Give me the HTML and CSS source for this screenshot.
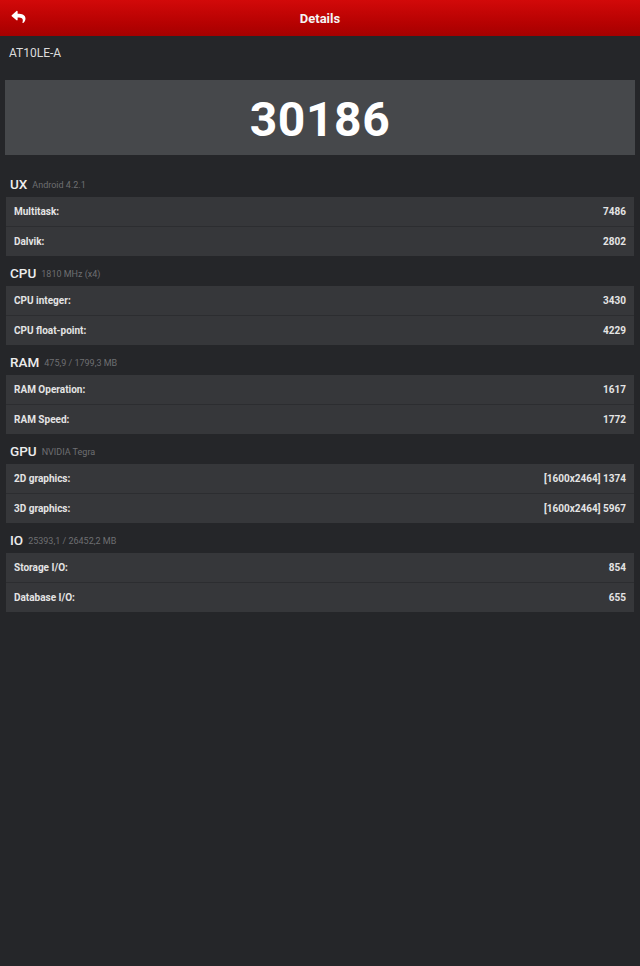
FILE: index.html
```html
<!DOCTYPE html>
<html>
<head>
<meta charset="utf-8">
<link rel="stylesheet" href="styles.css">
</head>
<body>
<header class="topbar">
  <svg class="back" viewBox="0 0 512 512" aria-hidden="true"><path fill="#fff" d="M8.3 189.8L184.3 37.9C199.7 24.5 224 35.3 224 56v80.1c160.6 1.8 288 34 288 186.2 0 61.4-39.6 122.3-83.3 154.1-13.7 9.9-33.1-2.5-28.1-18.6 45.3-145-21.5-183.5-176.6-185.7V360c0 20.7-24.3 31.5-39.7 18.2l-176-152c-11.1-9.6-11.1-26.8 0-36.4z"/></svg>
  <div class="title">Details</div>
</header>
<div class="model">AT10LE-A</div>
<div class="score">30186</div>

<section class="group">
  <div class="ghead"><span class="gname">UX</span><span class="gsub">Android 4.2.1</span></div>
  <div class="row"><span>Multitask:</span><span>7486</span></div>
  <div class="row"><span>Dalvik:</span><span>2802</span></div>
</section>
<section class="group">
  <div class="ghead"><span class="gname">CPU</span><span class="gsub">1810 MHz (x4)</span></div>
  <div class="row"><span>CPU integer:</span><span>3430</span></div>
  <div class="row"><span>CPU float-point:</span><span>4229</span></div>
</section>
<section class="group">
  <div class="ghead"><span class="gname">RAM</span><span class="gsub">475,9 / 1799,3 MB</span></div>
  <div class="row"><span>RAM Operation:</span><span>1617</span></div>
  <div class="row"><span>RAM Speed:</span><span>1772</span></div>
</section>
<section class="group">
  <div class="ghead"><span class="gname">GPU</span><span class="gsub">NVIDIA Tegra</span></div>
  <div class="row"><span>2D graphics:</span><span>[1600x2464] 1374</span></div>
  <div class="row"><span>3D graphics:</span><span>[1600x2464] 5967</span></div>
</section>
<section class="group">
  <div class="ghead"><span class="gname">IO</span><span class="gsub">25393,1 / 26452,2 MB</span></div>
  <div class="row"><span>Storage I/O:</span><span>854</span></div>
  <div class="row"><span>Database I/O:</span><span>655</span></div>
</section>
</body>
</html>
```

FILE: styles.css
```css
html, body {
  margin: 0;
  padding: 0;
  background: #252629;
  font-family: Roboto, "Liberation Sans", sans-serif;
  color: #e6e6e6;
  width: 640px;
  height: 966px;
}
.topbar {
  position: relative;
  height: 36px;
  background: linear-gradient(#d20909, #b80202 60%, #a50000);
  display: flex;
  align-items: center;
  justify-content: center;
}
.back {
  position: absolute;
  left: 11px;
  top: 10px;
  width: 15px;
  height: 14px;
}
.title {
  font-size: 13px;
  font-weight: 700;
  color: #f4f4f4;
}
.model {
  font-size: 12px;
  color: #dcdcdc;
  padding: 10px 0 0 9px;
  height: 34px;
  box-sizing: border-box;
  line-height: 15px;
}
.score {
  margin: 10px 5px 0 5px;
  height: 75px;
  box-sizing: border-box;
  padding-top: 4px;
  background: #46484b;
  color: #fff;
  font-size: 48px;
  font-weight: 700;
  display: flex;
  align-items: center;
  justify-content: center;
  letter-spacing: 0.6px;
}
.group {
  padding: 0 6px;
}
.group:first-of-type {
  margin-top: 12px;
}
.ghead {
  height: 30px;
  box-sizing: border-box;
  padding: 4px 0 0 4px;
  display: flex;
  align-items: center;
}
.gname {
  font-size: 13.5px;
  font-weight: 500;
  color: #ececec;
}
.gsub {
  font-size: 9px;
  color: #6e6f72;
  margin-left: 5px;
  margin-top: 1px;
}
.row {
  height: 29px;
  background: #36373a;
  display: flex;
  align-items: center;
  justify-content: space-between;
  padding: 0 8px;
  font-size: 10px;
  font-weight: 700;
  color: #e4e4e4;
}
.row + .row {
  border-top: 1px solid #2c2d30;
}
```
